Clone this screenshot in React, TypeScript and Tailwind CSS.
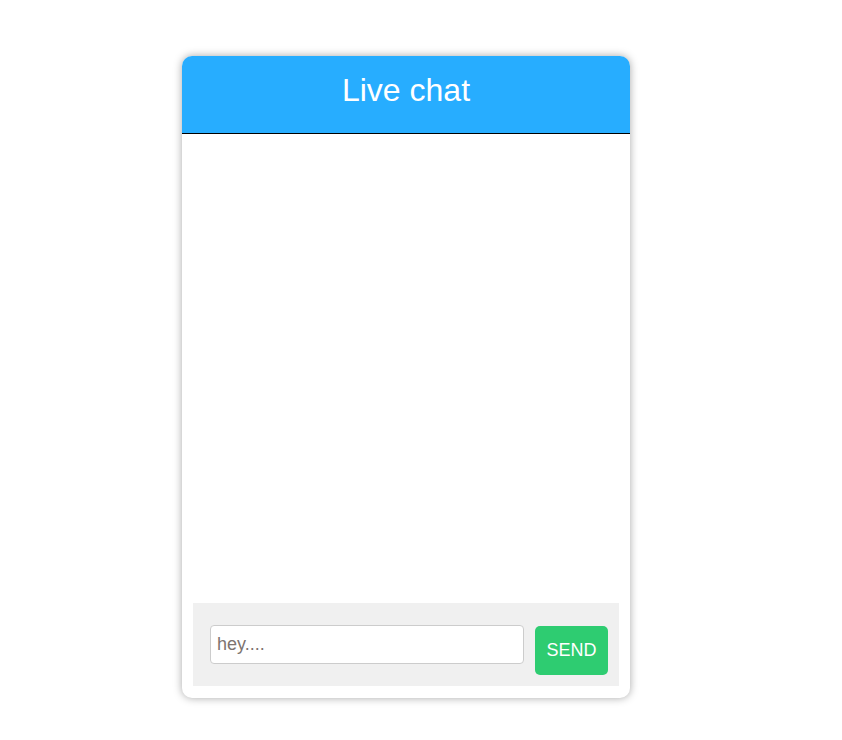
export default function App() {
  return (
    <div className="min-h-screen bg-white font-['Liberation_Sans',Arial,sans-serif]">
      <div className="pl-[182px] pt-[56px]">
        <div className="flex h-[642px] w-[448px] flex-col overflow-hidden rounded-[10px] bg-white shadow-[0_0_9px_rgba(0,0,0,0.35)]">
          <div className="flex h-[78px] shrink-0 items-center justify-center border-b border-black bg-[#27adff] pb-[10px]">
            <h1 className="text-[32px] leading-none text-white">Live chat</h1>
          </div>
          <div className="flex-1" />
          <div className="mx-[11px] mb-[12px] flex items-start gap-[11px] bg-[#f0f0f0] pb-[11px] pl-[17px] pr-[11px] pt-[22px]">
            <input
              type="text"
              placeholder="hey...."
              className="h-[39px] w-[314px] rounded-[4px] border border-[#cccccc] bg-white px-[6px] text-[18px] text-[#333] outline-none placeholder:text-[#7d7470]"
            />
            <button className="mt-[1px] h-[49px] w-[73px] rounded-[5px] bg-[#2ecc71] text-[18px] text-white">
              SEND
            </button>
          </div>
        </div>
      </div>
    </div>
  );
}
